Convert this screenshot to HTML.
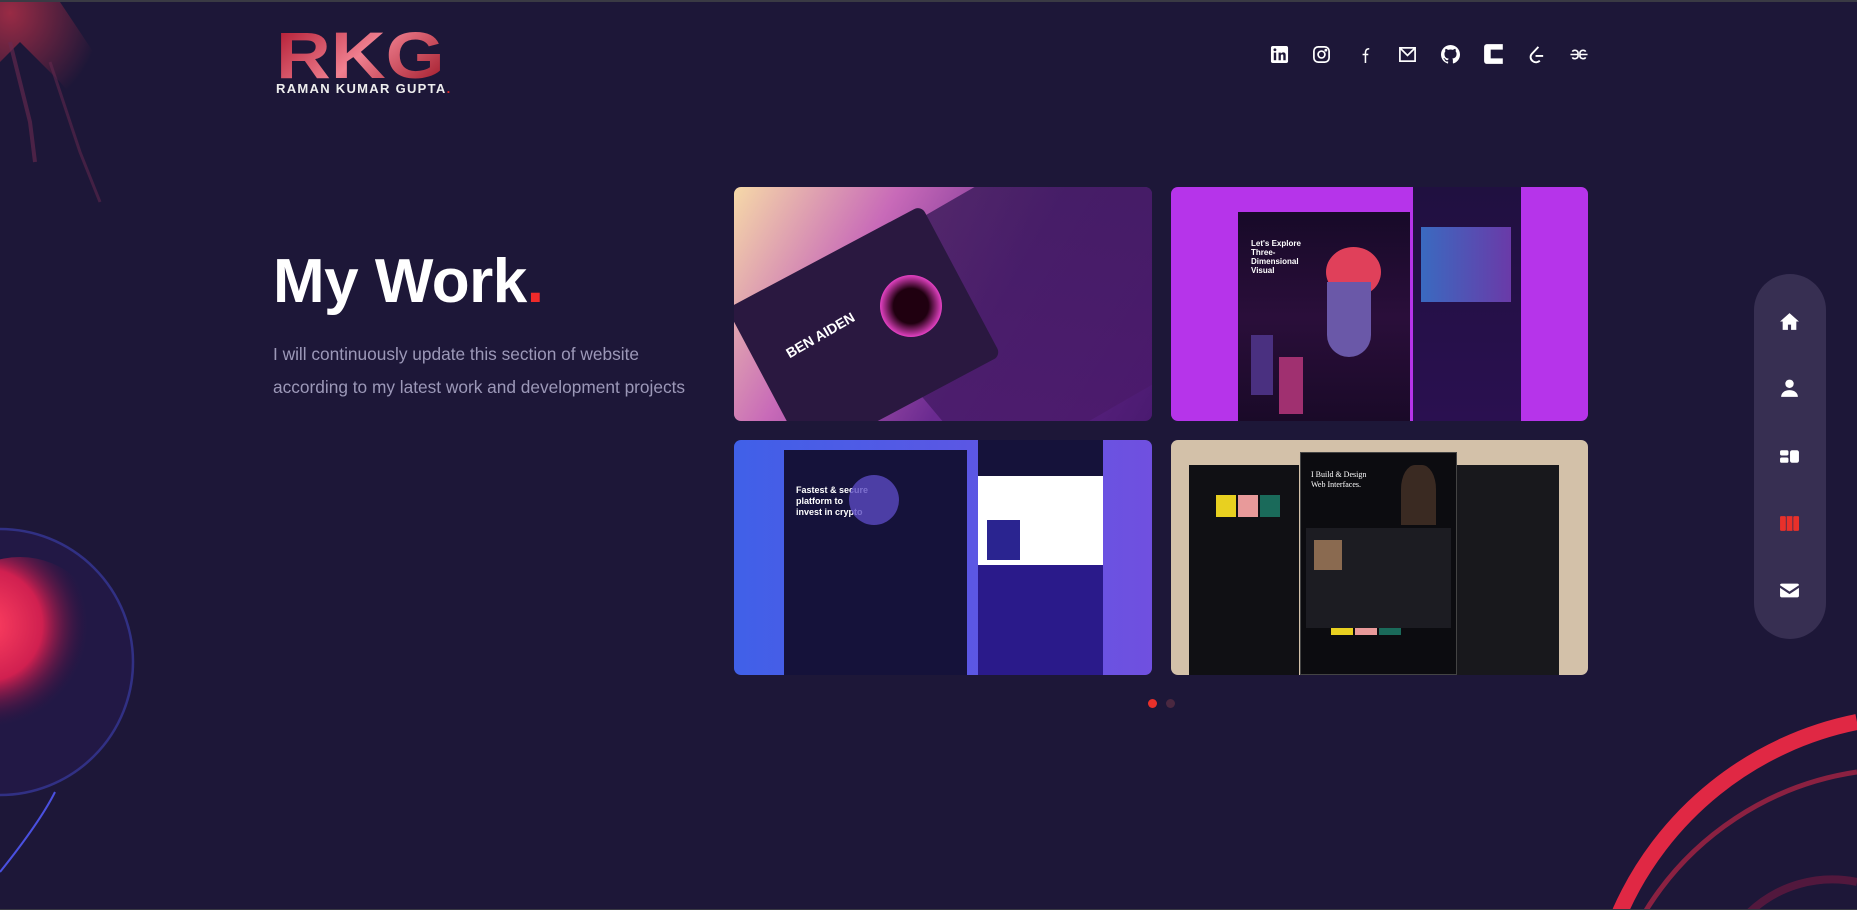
<!DOCTYPE html>
<html><head><meta charset="utf-8"><style>
*{margin:0;padding:0;box-sizing:border-box}
html,body{width:1857px;height:910px;overflow:hidden}
body{background:#1d1738;font-family:"Liberation Sans",sans-serif;position:relative;border-top:2px solid #3a3a44}
.abs{position:absolute}
.card{position:absolute;border-radius:7px;overflow:hidden}
.soc svg{position:absolute;width:19px;height:19px;top:43px}
.side svg{position:absolute;left:25px;width:21px;height:21px}
</style></head><body>
<svg class="abs" style="left:0;top:0" width="1857" height="910">
<defs>
<radialGradient id="br" cx="0.3" cy="0.4" r="0.6"><stop offset="0" stop-color="#ff4060"/><stop offset="0.55" stop-color="#d02050"/><stop offset="1" stop-color="#3a1040" stop-opacity="0"/></radialGradient>
<radialGradient id="sp" cx="0.1" cy="0.1" r="0.9"><stop offset="0" stop-color="#b83048" stop-opacity=".8"/><stop offset="1" stop-color="#b83048" stop-opacity="0"/></radialGradient>
</defs>
<path d="M0 0 L60 0 L80 30 L100 60 L85 110 L60 80 L40 60 L20 40 L0 60Z" fill="url(#sp)"/>
<path d="M10 40 L30 120 L35 160" stroke="#6a2a50" stroke-width="4" fill="none" opacity=".6"/>
<path d="M50 60 L80 150 L100 200" stroke="#6a2a50" stroke-width="3" fill="none" opacity=".5"/>
<circle cx="0" cy="660" r="133" fill="#2a1a55" opacity=".45" stroke="#4a50e0" stroke-width="2.5"/>
<path d="M0 870 Q40 820 55 790" fill="none" stroke="#4a50e0" stroke-width="2"/>
<ellipse cx="20" cy="640" rx="85" ry="85" fill="url(#br)"/>
<path d="M1620 910 A330 330 0 0 1 1857 720" fill="none" stroke="#e02844" stroke-width="16"/>
<path d="M1645 910 A300 300 0 0 1 1857 770" fill="none" stroke="#a82444" stroke-width="5" opacity=".8"/>
<path d="M1750 910 A120 120 0 0 1 1857 880" fill="none" stroke="#6a1a40" stroke-width="8" opacity=".7"/>
<rect x="0" y="907" width="1857" height="3" fill="#3a3a44"/>
</svg>

<div class="abs" style="left:276px;top:24px;font:900 66px/58px 'Liberation Sans',sans-serif;letter-spacing:0px;transform:scaleX(1.15);transform-origin:0 0;background:linear-gradient(135deg,#b01830,#f08090 50%,#a01828);-webkit-background-clip:text;background-clip:text;-webkit-text-fill-color:transparent">RKG</div>
<div class="abs" style="left:276px;top:80px;font:bold 13px/14px 'Liberation Sans',sans-serif;color:#eee;letter-spacing:1.3px">RAMAN KUMAR GUPTA<span style="color:#e02a2a">.</span></div>

<div class="abs" style="left:273px;top:240px;font:bold 62px/80px 'Liberation Sans',sans-serif;color:#fff;letter-spacing:-0.5px">My Work<span style="color:#ee2a2a">.</span></div>
<div class="abs" style="left:273px;top:336px;font:17.3px/33px 'Liberation Sans',sans-serif;color:#9c98b8;width:420px">I will continuously update this section of website according to my latest work and development projects</div>

<div class="soc" style="position:absolute;left:0;top:0">
<svg style="left:1270px" viewBox="0 0 20 20"><rect x="1" y="1" width="18" height="18" rx="2" fill="#fff"/><rect x="4" y="8" width="2.5" height="8" fill="#1d1738"/><circle cx="5.2" cy="5" r="1.5" fill="#1d1738"/><path d="M9 8h2.4v1.2c.6-1 1.6-1.4 2.6-1.4 2 0 2.5 1.3 2.5 3.2V16H14v-4.5c0-1-.3-1.6-1.2-1.6s-1.4.7-1.4 1.6V16H9z" fill="#1d1738"/></svg>
<svg style="left:1312px" viewBox="0 0 20 20" fill="none" stroke="#fff" stroke-width="1.8"><rect x="2" y="2" width="16" height="16" rx="4.5"/><circle cx="10" cy="10" r="3.6"/><circle cx="14.6" cy="5.4" r=".6" fill="#fff"/></svg>
<svg style="left:1355px" viewBox="0 0 20 20" fill="none" stroke="#fff" stroke-width="1.6"><path d="M11 19V8.5c0-3 1-4.5 4-4.5M8 10h6"/></svg>
<svg style="left:1398px" viewBox="0 0 20 20" fill="none" stroke="#fff" stroke-width="1.8"><rect x="2" y="3" width="16" height="14"/><path d="M2 3l8 8 8-8"/></svg>
<svg style="left:1441px" viewBox="0 0 16 16" fill="#fff"><path d="M8 0C3.6 0 0 3.6 0 8c0 3.5 2.3 6.5 5.5 7.6.4.1.5-.2.5-.4v-1.4c-2.2.5-2.7-1-2.7-1-.4-.9-.9-1.2-.9-1.2-.7-.5.1-.5.1-.5.8.1 1.2.8 1.2.8.7 1.2 1.9.9 2.3.7.1-.5.3-.9.5-1.1-1.8-.2-3.6-.9-3.6-4 0-.9.3-1.6.8-2.1-.1-.2-.4-1 .1-2.1 0 0 .7-.2 2.2.8.6-.2 1.3-.3 2-.3s1.4.1 2 .3c1.5-1 2.200-.8 2.2-.8.4 1.1.2 1.9.1 2.1.5.6.8 1.3.8 2.1 0 3.1-1.9 3.7-3.6 3.9.3.3.5.8.5 1.5v2.2c0 .2.1.5.6.4C13.7 14.5 16 11.5 16 8c0-4.4-3.6-8-8-8z"/></svg>
<svg style="left:1483px;width:22px;height:22px;top:41px" viewBox="0 0 20 20" fill="#fff"><path d="M4 1h14v5H7v8h11v5H4c-2 0-3-1-3-3V4c0-2 1-3 3-3z"/><rect x="8" y="9" width="2" height="1.2" fill="#1d1738"/><rect x="12" y="9" width="2" height="1.2" fill="#1d1738"/></svg>
<svg style="left:1527px" viewBox="0 0 20 20" fill="none" stroke="#fff" stroke-width="2"><path d="M12 2L5 9.5c-2 2.3-1.5 5.5 1 7.5 2.4 1.8 5.5 1.5 7.5-.5M9 11.5h8"/></svg>
<svg style="left:1568px;width:22px" viewBox="0 0 22 20" fill="none" stroke="#fff" stroke-width="1.7"><path d="M2 10h8M4 7c1-2 5-2 6 1v4c-1 3-5 3-6 1M20 10h-8M18 7c-1-2-5-2-6 1v4c1 3 5 3 6 1"/></svg>
</div>

<div class="card" style="left:734px;top:185px;width:418px;height:234px;background:linear-gradient(120deg,#f6d9a8 0%,#c86ab8 30%,#6a2a90 60%,#4a1a70 100%)">
 <div class="abs" style="left:150px;top:-20px;width:320px;height:260px;background:linear-gradient(#3a1a5a,#4a1a6a);transform:rotate(-30deg) skewX(10deg);opacity:.8"></div>
 <div class="abs" style="left:20px;top:60px;width:220px;height:170px;background:#2a1840;transform:rotate(-28deg);border-radius:8px"></div>
 <div class="abs" style="left:146px;top:88px;width:62px;height:62px;border-radius:50%;background:radial-gradient(#200010 40%,#e040c0 70%)"></div>
 <div class="abs" style="left:48px;top:140px;font:bold 14px 'Liberation Sans';color:#fff;transform:rotate(-30deg)">BEN AIDEN</div>
</div>
<div class="card" style="left:1171px;top:185px;width:417px;height:234px;background:#b634ea">
 <div class="abs" style="left:67px;top:25px;width:172px;height:209px;background:linear-gradient(#170a28,#2a0e3a 50%,#1a0a28)"></div>
 <div class="abs" style="left:242px;top:0;width:108px;height:234px;background:linear-gradient(#201040,#2a1050)"></div>
 <div class="abs" style="left:155px;top:60px;width:55px;height:50px;border-radius:50%;background:#e0405a"></div>
 <div class="abs" style="left:156px;top:95px;width:44px;height:75px;border-radius:0 0 25px 25px;background:#6a58a8"></div>
 <div class="abs" style="left:250px;top:40px;width:90px;height:75px;background:linear-gradient(90deg,#3a6ac0,#6a3aa8)"></div>
 <div class="abs" style="left:80px;top:148px;width:22px;height:60px;background:#4a3080"></div>
 <div class="abs" style="left:108px;top:170px;width:24px;height:57px;background:#a03070"></div>
 <div class="abs" style="left:80px;top:52px;font:bold 8px 'Liberation Sans';color:#fff;width:60px">Let's Explore Three-Dimensional Visual</div>
</div>
<div class="card" style="left:734px;top:438px;width:418px;height:235px;background:linear-gradient(90deg,#4060e8,#7050e0)">
 <div class="abs" style="left:50px;top:10px;width:183px;height:225px;background:#15123a"></div>
 <div class="abs" style="left:244px;top:0;width:125px;height:125px;background:#fff"></div>
 <div class="abs" style="left:244px;top:0;width:125px;height:36px;background:#15123a"></div>
 <div class="abs" style="left:244px;top:125px;width:125px;height:110px;background:#2a1a8a"></div>
 <div class="abs" style="left:253px;top:80px;width:33px;height:40px;background:#2a2490"></div>
 <div class="abs" style="left:62px;top:45px;font:bold 9px/11px 'Liberation Sans';color:#fff;width:75px">Fastest &amp; secure platform to invest in crypto</div>
 <div class="abs" style="left:115px;top:35px;width:50px;height:50px;border-radius:50%;background:#5a4ac0;opacity:.8"></div>
</div>
<div class="card" style="left:1171px;top:438px;width:417px;height:235px;background:#d3c1a9">
 <div class="abs" style="left:18px;top:25px;width:110px;height:210px;background:#101014"></div>
 <div class="abs" style="left:270px;top:25px;width:118px;height:210px;background:#18181c"></div>
 <div class="abs" style="left:129px;top:12px;width:157px;height:223px;background:#0c0c10;border:1px solid #444"></div>
 <div class="abs" style="left:45px;top:55px;width:20px;height:22px;background:#e8d020"></div>
 <div class="abs" style="left:67px;top:55px;width:20px;height:22px;background:#e89a9a"></div>
 <div class="abs" style="left:89px;top:55px;width:20px;height:22px;background:#1a6a5a"></div>
 <div class="abs" style="left:160px;top:170px;width:22px;height:25px;background:#e8d020"></div>
 <div class="abs" style="left:184px;top:170px;width:22px;height:25px;background:#e89a9a"></div>
 <div class="abs" style="left:208px;top:170px;width:22px;height:25px;background:#1a6a5a"></div>
 <div class="abs" style="left:135px;top:88px;width:145px;height:100px;background:#1c1c22"></div>
 <div class="abs" style="left:143px;top:100px;width:28px;height:30px;background:#8a6a50"></div>
 <div class="abs" style="left:230px;top:25px;width:35px;height:60px;background:#3a2a22;border-radius:40% 40% 0 0"></div>
 <div class="abs" style="left:140px;top:30px;font:8px/10px 'Liberation Serif';color:#fff;width:70px">I Build &amp; Design Web Interfaces.</div>
</div>

<div class="abs" style="left:1148px;top:697px;width:9px;height:9px;border-radius:50%;background:#e8302a"></div>
<div class="abs" style="left:1166px;top:697px;width:9px;height:9px;border-radius:50%;background:#4a2840"></div>

<div class="abs side" style="left:1754px;top:272px;width:72px;height:365px;border-radius:36px;background:#372f52">
<svg style="top:37px" viewBox="0 0 20 20" fill="#fff"><path d="M10 2L1 10h2.5v8h5v-5h3v5h5v-8H19z"/></svg>
<svg style="top:104px" viewBox="0 0 20 20" fill="#fff"><circle cx="10" cy="5.5" r="4"/><path d="M2 18c0-4 3.5-6.5 8-6.5s8 2.5 8 6.5z"/></svg>
<svg style="top:172px" viewBox="0 0 20 20" fill="#fff"><rect x="1" y="4" width="8" height="5" rx="1.5"/><rect x="1" y="11" width="8" height="5" rx="1.5"/><rect x="10.5" y="4" width="8.5" height="12" rx="2"/></svg>
<svg style="top:239px" viewBox="0 0 20 20" fill="#e8302a"><rect x="1" y="3" width="5.5" height="14" rx="1"/><rect x="7.3" y="3" width="5.5" height="14"/><rect x="13.6" y="3" width="5.5" height="14" rx="1"/></svg>
<svg style="top:306px" viewBox="0 0 20 20" fill="#fff"><path d="M1 5c0-1 .7-1.5 1.5-1.5h15c.8 0 1.5.5 1.5 1.5L10 11z"/><path d="M1 7.5l9 6 9-6V15c0 1-.7 1.5-1.5 1.5h-15C1.7 16.5 1 16 1 15z"/></svg>
</div>
</body></html>
